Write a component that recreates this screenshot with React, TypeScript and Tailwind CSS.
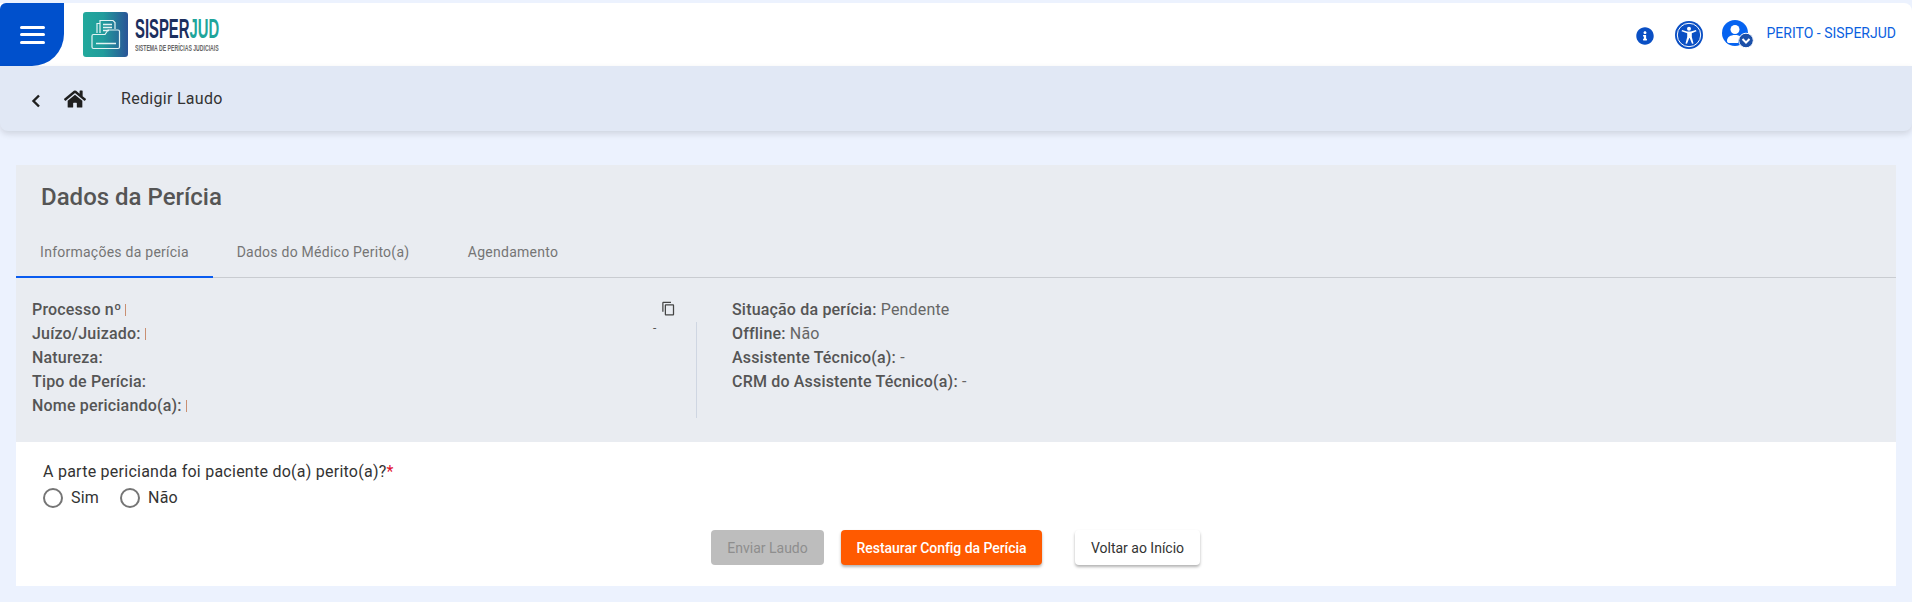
import React from "react";
import { FaHome, FaInfoCircle } from "react-icons/fa";
import { MdContentCopy } from "react-icons/md";

const roboto = "font-['Roboto',sans-serif]";

function LogoMark() {
  return (
    <svg width="45" height="45" viewBox="0 0 45 45" className="shrink-0">
      <defs>
        <linearGradient id="lg" x1="0" y1="0" x2="1" y2="0">
          <stop offset="0" stopColor="#22a99c" />
          <stop offset="0.45" stopColor="#219c9c" />
          <stop offset="1" stopColor="#2a5497" />
        </linearGradient>
      </defs>
      <rect width="45" height="45" rx="3" fill="url(#lg)" />
      <g fill="none" stroke="#e4f3f3" strokeWidth="1.2">
        <path d="M17 21V8.5h13l2 2V17" />
        <path d="M14 21V11.5h3" />
        <path d="M20 12.5h9M20 15.5h9M20 18.5h6" strokeWidth="1.5" />
        <path d="M10.5 36.5a1.5 1.5 0 0 1-1.5-1.5V24a1.5 1.5 0 0 1 1.5-1.5H22l3-4.500h10a1.500 1.500 0 0 1 1.500 1.500V35a1.500 1.500 0 0 1-1.500 1.500Z" />
        <path d="M13 31.500h20" strokeWidth="1.500" />
      </g>
    </svg>
  );
}

function AccessIcon() {
  return (
    <svg width="28" height="28" viewBox="0 0 28 28">
      <circle cx="14" cy="14" r="14" fill="#0a4fc4" />
      <circle cx="14" cy="14" r="11.700" fill="none" stroke="#fff" strokeWidth="1" />
      <circle cx="14" cy="7.800" r="2" fill="#fff" />
      <path d="M6.500 10.200l.6-1.300 5 1.600h3.800l5-1.600.6 1.300-4.700 2v3.800l1.700 6.400-1.500.4-2.300-5.800h-.4l-2.300 5.800-1.500-.4 1.700-6.400v-3.800Z" fill="#fff" />
    </svg>
  );
}

function UserIcon() {
  return (
    <svg width="34" height="30" viewBox="0 0 34 30">
      <circle cx="13" cy="13" r="13" fill="#0663f0" />
      <circle cx="13" cy="9.500" r="4.500" fill="#fff" />
      <path d="M5 21c0-4 3.500-6 8-6 2.500 0 4.500.6 6 1.800-2 1.500-3 3.400-3 6.200H7.500C6 23 5 22.500 5 21Z" fill="#fff" />
      <circle cx="24" cy="20.500" r="7.300" fill="#1b4fa8" stroke="#fff" strokeWidth="1" />
      <path d="M20.500 19l3.500 3.500 3.500-3.500" fill="none" stroke="#fff" strokeWidth="2" />
    </svg>
  );
}

function Row({ label, value, redacted }: { label: string; value?: string; redacted?: boolean }) {
  return (
    <div className="flex h-6 items-center whitespace-pre text-base leading-6 tracking-[0.18px] text-[#555]">
      <span className="font-medium">{label}</span>
      {value && <span className="font-normal text-[#666]"> {value}</span>}
      {redacted && <span className="ml-1 h-3 w-px bg-[#c98f72]" />}
    </div>
  );
}

function Radio({ label }: { label: string }) {
  return (
    <label className="flex items-center gap-2">
      <span className="h-5 w-5 rounded-full border-2 border-[#757575]" />
      <span className="text-base leading-6 tracking-[0.2px] text-[#333]">{label}</span>
    </label>
  );
}

export default function App() {
  return (
    <div className={`${roboto} flex min-h-[602px] flex-col bg-[#ecf2fe] pt-[3px]`}>
      <header className="flex h-[63px] items-center rounded-tr-lg bg-white">
        <div className="flex h-full w-16 flex-col items-center justify-center gap-[4.500px] rounded-tl-md rounded-br-[32px] bg-[#0050cc]">
          <span className="h-[3px] w-[25px] rounded-sm bg-white" />
          <span className="h-[3px] w-[25px] rounded-sm bg-white" />
          <span className="h-[3px] w-[25px] rounded-sm bg-white" />
        </div>
        <div className="ml-[19px] flex items-center gap-[7px]">
          <LogoMark />
          <div className="flex w-[84px] flex-col">
            <div className="h-[24px] origin-left scale-x-[0.55] whitespace-nowrap font-['Liberation_Sans',sans-serif] text-[27px] leading-[24px] font-bold text-[#1c2f5e]">
              SISPER<span className="text-[#1fa59b]">JUD</span>
            </div>
            <div className="mt-0.5 h-[10px] origin-left scale-x-[0.57] whitespace-nowrap font-['Liberation_Sans',sans-serif] text-[9px] leading-[10px] font-bold text-[#666]">
              SISTEMA DE PERÍCIAS JUDICIAIS
            </div>
          </div>
        </div>
        <div className="ml-auto flex items-center pr-4">
          <FaInfoCircle className="mr-[21px] mt-0.5 text-[#0a4fc4]" size={18} />
          <span className="mr-[19px] flex"><AccessIcon /></span>
          <span className="mr-[11px] flex"><UserIcon /></span>
          <span className="-mt-1 text-sm leading-5 text-[#0b5fe0]">PERITO - SISPERJUD</span>
        </div>
      </header>

      <nav className="flex h-[65px] items-center rounded-b-lg bg-[#e1e8f5] shadow-[0_3px_6px_rgba(0,0,0,0.12)]">
        <svg width="14" height="16" viewBox="0 0 14 16" className="ml-[29px] mt-1">
          <path d="M10 2.500L4.500 8l5.500 5.500" fill="none" stroke="#1f1f1f" strokeWidth="2.400" />
        </svg>
        <FaHome className="ml-[21px] text-[#1f1f1f]" size={22} />
        <span className="ml-[35px] text-base leading-6 tracking-[0.3px] text-[#333]">Redigir Laudo</span>
      </nav>

      <main className="mx-4 mt-[34px] flex flex-col">
        <section className="flex h-[277px] flex-col bg-[#e9ecf1]">
          <h1 className="mt-[17px] ml-[25px] h-[30px] text-2xl leading-[30px] font-medium text-[#555]">Dados da Perícia</h1>
          <div className="mt-[18px] flex h-[48px] border-b border-[#c9ccd1]">
            <div className="-mb-px flex h-[48px] w-[197px] items-center justify-center border-b-2 border-[#0a5cf0] pb-[3px] text-sm tracking-[0.25px] text-[#757575]">
              Informações da perícia
            </div>
            <div className="flex h-[47px] w-[220px] items-center justify-center pb-[3px] text-sm tracking-[0.25px] text-[#757575]">
              Dados do Médico Perito(a)
            </div>
            <div className="ml-[11px] flex h-[47px] w-[138px] items-center justify-center pb-[3px] text-sm tracking-[0.25px] text-[#757575]">
              Agendamento
            </div>
          </div>
          <div className="flex pt-5">
            <div className="relative h-[120px] w-[680px] pl-4">
              <Row label="Processo nº" redacted />
              <Row label="Juízo/Juizado:" redacted />
              <Row label="Natureza:" />
              <Row label="Tipo de Perícia:" />
              <Row label="Nome periciando(a):" redacted />
              <MdContentCopy className="absolute left-[645px] top-[3px] text-[#444]" size={15} />
              <span className="absolute left-[637px] top-[22px] text-xs leading-4 text-[#555]">-</span>
              <span className="absolute left-[680px] top-6 h-[96px] w-px bg-[#cfd6e2]" />
            </div>
            <div className="ml-9 flex flex-col">
              <Row label="Situação da perícia:" value="Pendente" />
              <Row label="Offline:" value="Não" />
              <Row label="Assistente Técnico(a):" value="-" />
              <Row label="CRM do Assistente Técnico(a):" value="-" />
            </div>
          </div>
        </section>

        <section className="h-[144px] bg-white pt-[18px]">
          <div className="ml-[27px] h-6 text-base leading-6 tracking-[0.25px] text-[#333]">
            A parte pericianda foi paciente do(a) perito(a)?<span className="text-[#e0102f]">*</span>
          </div>
          <div className="mt-0.5 ml-[27px] flex gap-[21px]">
            <Radio label="Sim" />
            <Radio label="Não" />
          </div>
          <div className="mt-5 flex pl-[695px]">
            <button className="h-[35px] w-[113px] rounded bg-[#bdbdbd] text-sm text-[#8e8e8e]">Enviar Laudo</button>
            <button className="ml-[17px] h-[35px] w-[201px] rounded bg-[#ff5a00] text-sm font-medium tracking-[-0.05px] text-white shadow-[0_2px_3px_rgba(0,0,0,0.3)]">Restaurar Config da Perícia</button>
            <button className="ml-[33px] h-[35px] w-[125px] rounded bg-white text-sm text-[#333] shadow-[0_2px_3px_rgba(0,0,0,0.3)]">Voltar ao Início</button>
          </div>
        </section>
      </main>
    </div>
  );
}
